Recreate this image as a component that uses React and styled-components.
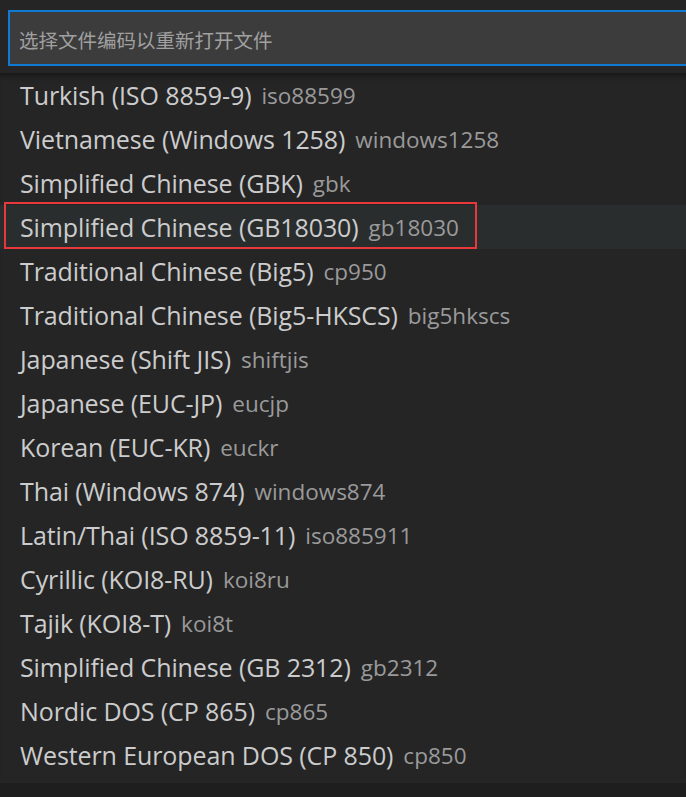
import React from 'react';
import styled, { createGlobalStyle } from 'styled-components';

const GlobalStyle = createGlobalStyle`
    html, body {
        margin: 0;
        padding: 0;
        background: #1e1e1e;
    }
    body {
        font-family: "Open Sans", "Noto Sans", "Noto Sans CJK SC", sans-serif;
    }
`;

const Widget = styled.div`
    width: 686px;
    height: 797px;
    background: #1e1e1e;
    overflow: hidden;
`;

const Panel = styled.div`
    background: #252526;
    padding-bottom: 6px;
`;

const InputRow = styled.div`
    padding: 10px 0 7px 8px;
`;

const InputBox = styled.div`
    height: 50px;
    background: #3c3c3c;
    border: 2px solid #0e7ad3;
    border-right: none;
    display: flex;
    align-items: center;
    padding-left: 9px;
    padding-top: 2px;
    box-sizing: content-box;
    font-family: "Noto Sans CJK SC", "Noto Sans", sans-serif;
    font-size: 19.5px;
    color: #a0a0a0;
`;

const List = styled.div`
    box-shadow: inset 0 6px 6px -4px rgba(0, 0, 0, 0.45);
`;

const Row = styled.div`
    position: relative;
    height: 44px;
    display: flex;
    align-items: center;
    gap: 10px;
    padding-left: 20px;
    background: ${(props) => (props.$focused ? '#2a2d2e' : 'transparent')};
    white-space: nowrap;
`;

const Label = styled.span`
    font-size: 25px;
    color: #cccccc;
    letter-spacing: -0.1px;
`;

const Desc = styled.span`
    font-size: 22.5px;
    color: #9a9a9a;
`;

// red annotation frame drawn over the selected row
const Marker = styled.div`
    position: absolute;
    left: 4px;
    top: -3px;
    width: 473px;
    height: 47px;
    border: 2px solid #e8383c;
    box-sizing: border-box;
    pointer-events: none;
`;

const encodings = [
    ['Turkish (ISO 8859-9)', 'iso88599'],
    ['Vietnamese (Windows 1258)', 'windows1258'],
    ['Simplified Chinese (GBK)', 'gbk'],
    ['Simplified Chinese (GB18030)', 'gb18030'],
    ['Traditional Chinese (Big5)', 'cp950'],
    ['Traditional Chinese (Big5-HKSCS)', 'big5hkscs'],
    ['Japanese (Shift JIS)', 'shiftjis'],
    ['Japanese (EUC-JP)', 'eucjp'],
    ['Korean (EUC-KR)', 'euckr'],
    ['Thai (Windows 874)', 'windows874'],
    ['Latin/Thai (ISO 8859-11)', 'iso885911'],
    ['Cyrillic (KOI8-RU)', 'koi8ru'],
    ['Tajik (KOI8-T)', 'koi8t'],
    ['Simplified Chinese (GB 2312)', 'gb2312'],
    ['Nordic DOS (CP 865)', 'cp865'],
    ['Western European DOS (CP 850)', 'cp850'],
];

export default function App() {
    return (
        <>
            <GlobalStyle />
            <Widget>
                <Panel>
                    <InputRow>
                        <InputBox>选择文件编码以重新打开文件</InputBox>
                    </InputRow>
                    <List>
                        {encodings.map(([label, id]) => (
                            <Row key={id} $focused={id === 'gb18030'}>
                                <Label>{label}</Label>
                                <Desc>{id}</Desc>
                                {id === 'gb18030' && <Marker />}
                            </Row>
                        ))}
                    </List>
                </Panel>
            </Widget>
        </>
    );
}
